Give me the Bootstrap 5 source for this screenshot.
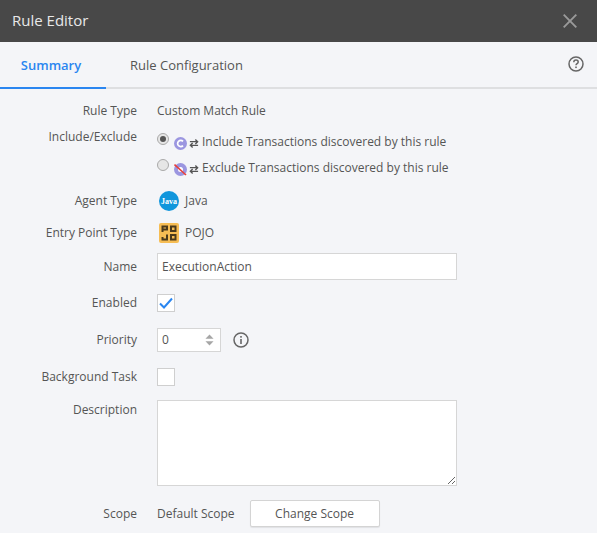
<!DOCTYPE html>
<html lang="en">
<head>
    <meta charset="UTF-8">
    <meta name="viewport" content="width=device-width, initial-scale=1.0">
    <title>Rule Editor</title>
    <link rel="stylesheet" href="https://cdn.jsdelivr.net/npm/bootstrap@5.3.0/dist/css/bootstrap.min.css">
    <style>
        html, body { height: 533px; overflow: hidden; }
        body {
            font-family: "Open Sans", "Liberation Sans", sans-serif;
            font-size: 12px;
            line-height: 18px;
            background-color: #f4f5f8;
            color: #555;
        }
        .editor-head { height: 42px; background-color: #484848; color: #e8e8e8; font-size: 15px; padding: 0 12px 2px; }
        .close-mark { margin-right: 8px; margin-top: 2px; }
        .editor-tabs { height: 47px; border-bottom: 2px solid #dedfe1; padding-right: 13px; }
        .tab-item { height: 47px; margin-bottom: -2px; font-size: 13px; line-height: 46px; color: #555; text-decoration: none; }
        .tab-on { width: 106px; text-align: center; padding-right: 4px; color: #2a86f0; font-weight: 600; border-bottom: 2px solid #2a86f0; }
        .tab-off { margin-left: 24px; }
        .help-mark { margin-top: 14px; }
        .rule-form { padding-top: 11px; }
        .rule-row { display: flex; gap: 20px; }
        .rule-label { width: 137px; flex: none; text-align: right; }
        .h-type { height: 22px; margin-bottom: 6px; }
        .h-choice { height: 54px; margin-bottom: 3px; }
        .choice-line { height: 26px; }
        .h-agent { height: 32px; }
        .h-entry { height: 32px; margin-bottom: 4px; }
        .h-name { height: 27px; margin-bottom: 13px; }
        .h-enabled { height: 19px; margin-bottom: 16px; }
        .h-priority { height: 24px; margin-bottom: 16px; }
        .h-bg { height: 18px; margin-bottom: 14px; }
        .h-desc { height: 86px; margin-bottom: 14px; }
        .h-desc .rule-label { padding-top: 1px; }
        .h-scope { height: 27px; }
        .radio-dot { width: 12px; height: 12px; border-radius: 50%; border: 1px solid #a9a9a9; background-color: #e6e6e6; flex: none; margin-right: 5px; position: relative; top: -3px; }
        .radio-on::after { content: ""; display: block; width: 6px; height: 6px; margin: 2px; border-radius: 50%; background-color: #555; }
        .kind-mark { margin-top: 2px; }
        .swap-mark { margin-top: 2px; margin-left: 2px; margin-right: 3px; }
        .java-mark { margin-left: 1px; margin-right: 5px; }
        .pojo-mark { margin-left: 2px; margin-right: 6px; }
        .field-input { background: #fff; border: 1px solid #d6d6d6; color: #555; font-size: 12px; padding: 0 4px; border-radius: 0; outline: none; }
        .name-input { width: 300px; height: 27px; }
        .desc-input { width: 300px; height: 86px; display: block; resize: both; }
        .tick-box { width: 18px; height: 18px; background: #fff; border: 1px solid #cfcfcf; }
        .spin-box { width: 64px; height: 24px; padding: 0 6px 0 4px; }
        .info-mark { margin-left: -8px; }
        .change-btn { width: 130px; height: 27px; background: #fff; border: 1px solid #d4d4d4; border-radius: 2px; color: #555; font-size: 12px; font-weight: 500; padding: 0; box-shadow: 0 1px 1px rgba(0,0,0,.08); }
        .scope-line { gap: 15px; }
    </style>
</head>
<body>
    <div class="editor-head d-flex align-items-center justify-content-between">
        <span>Rule Editor</span>
        <svg width="14" height="14" viewBox="0 0 14 14" class="close-mark"><path d="M.7 .7l12.600 12.600M13.300 .7L.7 13.300" stroke="#9a9a9a" stroke-width="1.900" fill="none"/></svg>
    </div>

    <div class="editor-tabs d-flex align-items-start">
        <a href="#" class="tab-item tab-on">Summary</a>
        <a href="#" class="tab-item tab-off">Rule Configuration</a>
        <svg width="16" height="16" viewBox="0 0 16 16" class="ms-auto help-mark">
            <circle cx="8" cy="8" r="7" stroke="#666" stroke-width="1.500" fill="none"/>
            <path d="M5.800 6.200C5.800 4.800 6.800 4 8 4s2.200.8 2.200 2c0 1.600-2.200 1.600-2.200 3.200" stroke="#666" stroke-width="1.500" fill="none"/>
            <rect x="7.200" y="10.500" width="1.600" height="1.600" fill="#666"/>
        </svg>
    </div>

    <div class="rule-form">
        <div class="rule-row h-type align-items-center">
            <div class="rule-label">Rule Type</div>
            <div>Custom Match Rule</div>
        </div>

        <div class="rule-row h-choice">
            <div class="rule-label">Include/Exclude</div>
            <div>
                <div class="choice-line d-flex align-items-center" style="margin-top:1px">
                    <span class="radio-dot radio-on"></span>
                    <svg width="13" height="13" viewBox="0 0 13 13" class="kind-mark"><circle cx="6.500" cy="6.500" r="6.500" fill="#9b96e0"/><path d="M9 4.400A3.100 3.100 0 1 0 9 8.600" stroke="#fff" stroke-width="1.700" fill="none"/></svg>
                    <svg width="10" height="11" viewBox="0 0 11 11" class="swap-mark"><path d="M1 3.500h8M7 1l2.500 2.500L7 6M10 7.500H2M4 5L1.500 7.500L4 10" stroke="#555" stroke-width="1.500" fill="none"/></svg>
                    <span>Include Transactions discovered by this rule</span>
                </div>
                <div class="choice-line d-flex align-items-center">
                    <span class="radio-dot"></span>
                    <svg width="13" height="13" viewBox="0 0 13 13" class="kind-mark"><circle cx="6.500" cy="6.500" r="6.500" fill="#9b96e0"/><circle cx="6.500" cy="6.500" r="2.500" fill="#fff"/><path d="M.5 1.500L12 12" stroke="#e8403a" stroke-width="1.600"/></svg>
                    <svg width="10" height="11" viewBox="0 0 11 11" class="swap-mark"><path d="M1 3.500h8M7 1l2.500 2.500L7 6M10 7.500H2M4 5L1.500 7.500L4 10" stroke="#555" stroke-width="1.500" fill="none"/></svg>
                    <span>Exclude Transactions discovered by this rule</span>
                </div>
            </div>
        </div>

        <div class="rule-row h-agent align-items-center">
            <div class="rule-label">Agent Type</div>
            <div class="d-flex align-items-center">
                <svg width="22" height="22" viewBox="0 0 22 22" class="java-mark"><circle cx="11" cy="11" r="10" fill="#1196dc"/><text x="11" y="13.800" font-size="8" font-weight="700" fill="#fff" text-anchor="middle" font-family="Liberation Serif, serif">Java</text></svg>
                <span>Java</span>
            </div>
        </div>

        <div class="rule-row h-entry align-items-center">
            <div class="rule-label">Entry Point Type</div>
            <div class="d-flex align-items-center">
                <svg width="20" height="20" viewBox="0 0 20 20" class="pojo-mark">
                    <rect width="20" height="20" rx="2" fill="#f6bd54"/>
                    <g fill="none" stroke="#4a3a1c" stroke-width="2">
                        <path d="M3.500 9V3.500H8V6.500H3.500"/>
                        <rect x="12" y="3.500" width="4.500" height="4.500"/>
                        <path d="M8 11.500V16.500H3.500V14"/>
                        <rect x="12" y="12" width="4.500" height="4.500"/>
                    </g>
                </svg>
                <span>POJO</span>
            </div>
        </div>

        <div class="rule-row h-name align-items-center">
            <div class="rule-label">Name</div>
            <input type="text" class="field-input name-input" value="ExecutionAction">
        </div>

        <div class="rule-row h-enabled align-items-center">
            <div class="rule-label">Enabled</div>
            <div class="tick-box d-flex align-items-center justify-content-center">
                <svg width="14" height="12" viewBox="0 0 14 12"><path d="M1 6.500L5 10.500L13 1.500" stroke="#2a86f0" stroke-width="2" fill="none"/></svg>
            </div>
        </div>

        <div class="rule-row h-priority align-items-center">
            <div class="rule-label">Priority</div>
            <div class="field-input spin-box d-flex align-items-center justify-content-between">
                <span>0</span>
                <svg width="9" height="14" viewBox="0 0 10 14"><path d="M5 1L9.500 5.500H.5zM5 13L9.500 8.500H.5z" fill="#a6a6a6"/></svg>
            </div>
            <svg width="16" height="16" viewBox="0 0 16 16" class="info-mark">
                <circle cx="8" cy="8" r="7" stroke="#666" stroke-width="1.500" fill="none"/>
                <rect x="7.200" y="7" width="1.600" height="5" fill="#666"/>
                <rect x="7.200" y="4" width="1.600" height="1.700" fill="#666"/>
            </svg>
        </div>

        <div class="rule-row h-bg align-items-center">
            <div class="rule-label">Background Task</div>
            <div class="tick-box"></div>
        </div>

        <div class="rule-row h-desc">
            <div class="rule-label">Description</div>
            <textarea class="field-input desc-input"></textarea>
        </div>

        <div class="rule-row h-scope align-items-center">
            <div class="rule-label">Scope</div>
            <div class="d-flex align-items-center scope-line">
                <span>Default Scope</span>
                <button type="button" class="change-btn">Change Scope</button>
            </div>
        </div>
    </div>

    <script src="https://cdn.jsdelivr.net/npm/bootstrap@5.3.0/dist/js/bootstrap.bundle.min.js"></script>
</body>
</html>
